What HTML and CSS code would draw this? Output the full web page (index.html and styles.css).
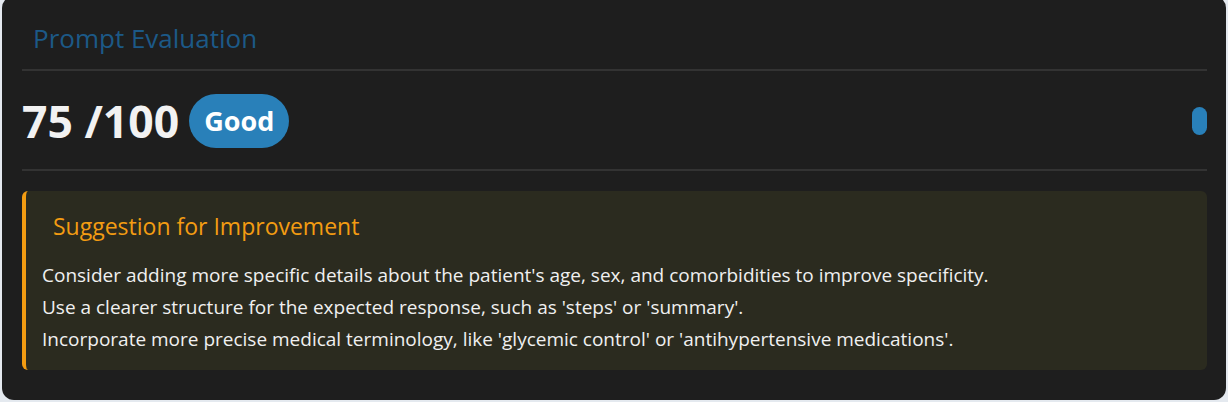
FILE: index.html
```html
<!DOCTYPE html>
<html lang="en">
<head>
<meta charset="utf-8">
<title>Prompt Evaluation</title>
<link rel="stylesheet" href="styles.css">
</head>
<body>
<div class="card">
  <div class="card-header">
    <h2 class="card-title">Prompt Evaluation</h2>
  </div>
  <div class="score-row">
    <div class="score-left">
      <span class="score">75 /100</span>
      <span class="badge">Good</span>
    </div>
    <span class="pill"></span>
  </div>
  <div class="suggestion">
    <h3 class="suggestion-title">Suggestion for Improvement</h3>
    <p class="suggestion-line">Consider adding more specific details about the patient's age, sex, and comorbidities to improve specificity.</p>
    <p class="suggestion-line">Use a clearer structure for the expected response, such as 'steps' or 'summary'.</p>
    <p class="suggestion-line">Incorporate more precise medical terminology, like 'glycemic control' or 'antihypertensive medications'.</p>
  </div>
</div>
</body>
</html>
```

FILE: styles.css
```css
html, body {
  margin: 0;
  padding: 0;
  background: #e4e9ef;
}
body {
  padding: 0 2px;
  font-family: "Open Sans", "Noto Sans", sans-serif;
  color: #f0f0f0;
}
.card {
  margin-top: -4px;
  height: 404px;
  box-sizing: border-box;
  background: #1e1e1e;
  border-radius: 12px;
  padding: 4px 19px 0 20px;
}
.card-header {
  border-bottom: 2px solid #333333;
  padding: 21px 11px 0;
  box-sizing: border-box;
  height: 71px;
}
.card-title {
  margin: 0;
  font-size: 26px;
  font-weight: 400;
  color: #1c5987;
  line-height: 34px;
}
.score-row {
  height: 100px;
  box-sizing: border-box;
  padding-top: 2px;
  border-bottom: 2px solid #333333;
  display: flex;
  align-items: center;
  justify-content: space-between;
}
.score-left {
  display: flex;
  align-items: center;
  gap: 10px;
}
.score {
  font-size: 44.5px;
  font-weight: 700;
  color: #f2f2f2;
  line-height: 56px;
}
.badge {
  background: #2980b9;
  color: #ffffff;
  font-weight: 700;
  font-size: 27px;
  height: 54px;
  line-height: 54px;
  padding: 0 15px;
  border-radius: 27px;
}
.pill {
  width: 15px;
  height: 28px;
  border-radius: 8px;
  background: #2980b9;
}
.suggestion {
  margin-top: 20px;
  background: #2b2b1f;
  border-left: 4px solid #f39c12;
  border-radius: 6px;
  padding: 20px 16px 15px 16px;
}
.suggestion-title {
  margin: 0 0 18px 0;
  padding: 0 11px;
  font-size: 23px;
  font-weight: 400;
  color: #f39c12;
  line-height: 30px;
}
.suggestion-line {
  margin: 0;
  font-size: 19px;
  line-height: 32px;
}
```
